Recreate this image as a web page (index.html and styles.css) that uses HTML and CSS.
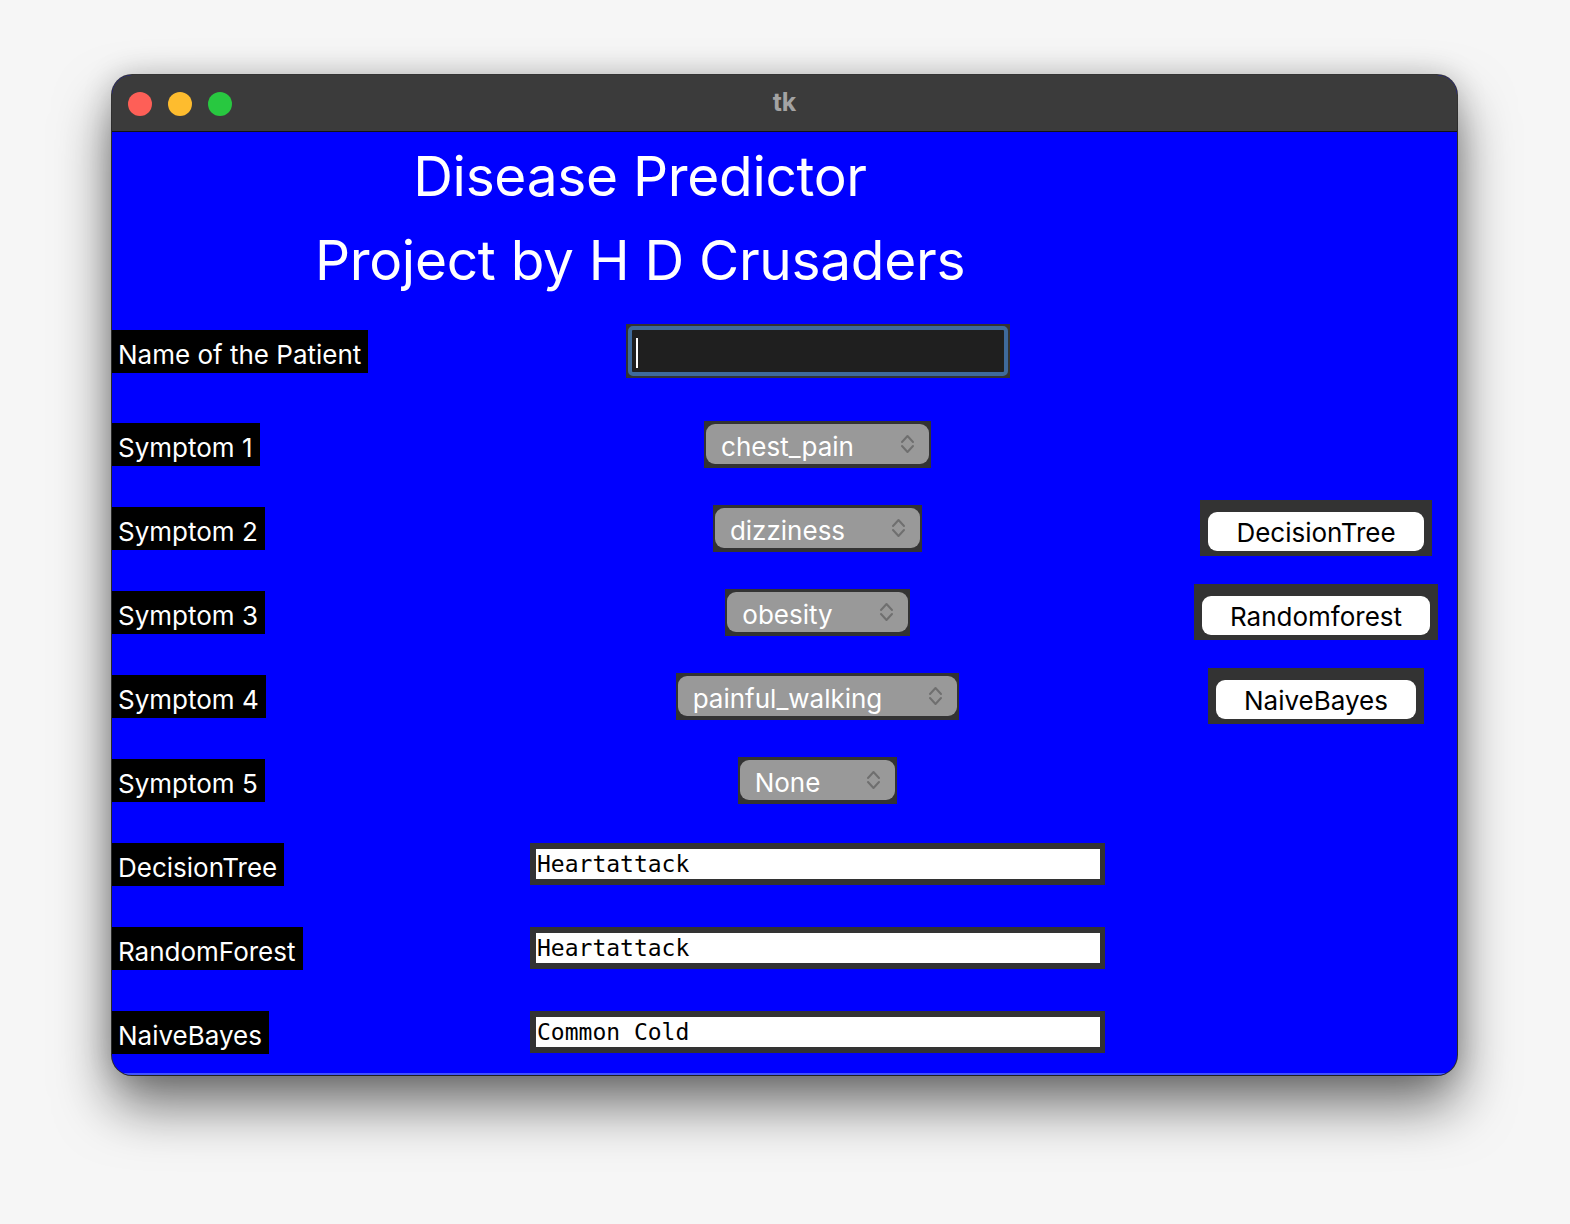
FILE: index.html
```html
<!DOCTYPE html>
<html>
<head>
<meta charset="utf-8">
<link rel="stylesheet" href="styles.css">
</head>
<body>
<div class="window">
  <div class="titlebar">
    <div class="lights">
      <span class="light red"></span>
      <span class="light yellow"></span>
      <span class="light green"></span>
    </div>
    <div class="wtitle">tk</div>
  </div>
  <div class="content">
    <div class="title t1">Disease Predictor</div>
    <div class="title t2">Project by H D Crusaders</div>

    <div class="label r-name">Name of the Patient</div>
    <div class="name-entry r-name"><span class="caret"></span></div>

    <div class="label r1">Symptom 1</div>
    <div class="select r1"><div class="pill"><span>chest_pain</span><svg class="chev" viewBox="0 0 15 22" width="15" height="22"><polyline points="2,9 7.5,3 13,9"/><polyline points="2,13 7.5,19 13,13"/></svg></div></div>

    <div class="label r2">Symptom 2</div>
    <div class="select r2"><div class="pill"><span>dizziness</span><svg class="chev" viewBox="0 0 15 22" width="15" height="22"><polyline points="2,9 7.5,3 13,9"/><polyline points="2,13 7.5,19 13,13"/></svg></div></div>
    <div class="btn-wrap r2"><div class="btn">DecisionTree</div></div>

    <div class="label r3">Symptom 3</div>
    <div class="select r3"><div class="pill"><span>obesity</span><svg class="chev" viewBox="0 0 15 22" width="15" height="22"><polyline points="2,9 7.5,3 13,9"/><polyline points="2,13 7.5,19 13,13"/></svg></div></div>
    <div class="btn-wrap r3"><div class="btn">Randomforest</div></div>

    <div class="label r4">Symptom 4</div>
    <div class="select r4"><div class="pill"><span>painful_walking</span><svg class="chev" viewBox="0 0 15 22" width="15" height="22"><polyline points="2,9 7.5,3 13,9"/><polyline points="2,13 7.5,19 13,13"/></svg></div></div>
    <div class="btn-wrap r4"><div class="btn">NaiveBayes</div></div>

    <div class="label r5">Symptom 5</div>
    <div class="select r5"><div class="pill"><span>None</span><svg class="chev" viewBox="0 0 15 22" width="15" height="22"><polyline points="2,9 7.5,3 13,9"/><polyline points="2,13 7.5,19 13,13"/></svg></div></div>

    <div class="label r6">DecisionTree</div>
    <div class="out r6"><div class="out-in">Heartattack</div></div>

    <div class="label r7">RandomForest</div>
    <div class="out r7"><div class="out-in">Heartattack</div></div>

    <div class="label r8">NaiveBayes</div>
    <div class="out r8"><div class="out-in">Common Cold</div></div>
  </div>
</div>
</body>
</html>
```
FILE: styles.css
```css
html, body {
  margin: 0;
  padding: 0;
}
body {
  background: #f6f6f6;
  width: 1570px;
  height: 1224px;
  padding: 75px 0 0 112px;
  box-sizing: border-box;
  font-family: "Inter", "Noto Sans", sans-serif;
  overflow: hidden;
}
.window {
  width: 1345px;
  height: 1000px;
  border-radius: 20px;
  overflow: hidden;
  box-shadow: 0 0 0 1px rgba(0,0,0,0.75), 0 30px 55px rgba(0,0,0,0.55), 0 0 30px rgba(0,0,0,0.18);
  background: #0000ff;
}
.titlebar {
  height: 57px;
  background: #3b3b3b;
  border-bottom: 1px solid #121212;
  box-sizing: border-box;
  display: flex;
  align-items: center;
  position: relative;
}
.lights {
  display: flex;
  gap: 16px;
  padding-left: 16px;
  padding-top: 2px;
}
.light {
  width: 24px;
  height: 24px;
  border-radius: 50%;
  display: block;
}
.red { background: #fe5f57; }
.yellow { background: #febc2e; }
.green { background: #28c840; }
.wtitle {
  position: absolute;
  left: 0;
  right: 0;
  text-align: center;
  color: #a3a3a3;
  font-weight: 700;
  font-size: 25px;
  top: 12px;
}
.content {
  height: 943px;
  display: grid;
  grid-template-columns: 418px 575px 1fr;
  grid-template-rows: 88px 80px 102px repeat(8, 84px);
  color: #fff;
  box-shadow: inset 0 -2px 0 rgba(110,140,255,0.6);
}
.title {
  grid-column: 1 / 4;
  width: 1056px;
  text-align: center;
  font-size: 55px;
  letter-spacing: -0.3px;
  align-self: center;
  line-height: 1;
}
.t1 { grid-row: 1; }
.t2 { grid-row: 2; }
.r-name { grid-row: 3; }
.r1 { grid-row: 4; }
.r2 { grid-row: 5; }
.r3 { grid-row: 6; }
.r4 { grid-row: 7; }
.r5 { grid-row: 8; }
.r6 { grid-row: 9; }
.r7 { grid-row: 10; }
.r8 { grid-row: 11; }

.label {
  grid-column: 1;
  justify-self: start;
  align-self: center;
  background: #000;
  color: #fff;
  font-size: 26px;
  height: 43px;
  line-height: 49px;
  padding: 0 7px 0 6px;
  white-space: nowrap;
  overflow: hidden;
}
.name-entry {
  grid-column: 2;
  justify-self: center;
  align-self: center;
  width: 384px;
  height: 54px;
  box-sizing: border-box;
  background: #333;
  padding: 2px;
  display: flex;
}
.caret {
  flex: 1;
  border: 4px solid #3e6a9c;
  border-radius: 5px;
  background: #1f1f1f;
  position: relative;
}
.caret::after {
  content: "";
  position: absolute;
  left: 4px;
  top: 8px;
  width: 2px;
  height: 30px;
  background: #fff;
}
.select {
  grid-column: 2;
  justify-self: center;
  align-self: center;
  background: #333;
  padding: 3px 2px 4px 2px;
}
.pill {
  display: flex;
  align-items: center;
  height: 40px;
  background: #999999;
  border-radius: 9px;
  padding: 0 14px 0 15px;
  color: #fff;
  font-size: 26px;
}
.pill span {
  margin-right: 46px;
  line-height: 36px;
  padding-top: 6px;
}
.chev {
  display: block;
}
.chev polyline {
  fill: none;
  stroke: #6f6f6f;
  stroke-width: 2;
  stroke-linecap: round;
  stroke-linejoin: round;
}
.btn-wrap {
  grid-column: 3;
  justify-self: center;
  align-self: center;
  margin-left: 70px;
  background: #333;
  padding: 12px 8px 5px 8px;
}
.btn {
  background: #fff;
  color: #000;
  border-radius: 9px;
  height: 39px;
  line-height: 42px;
  padding: 0 28px;
  font-size: 26px;
  text-align: center;
  white-space: nowrap;
}
.out {
  grid-column: 2;
  align-self: center;
  height: 42px;
  box-sizing: border-box;
  background: #333;
  padding: 6px 5px 6px 6px;
  width: 575px;
}
.out-in {
  background: #fff;
  color: #000;
  height: 30px;
  line-height: 30px;
  font-family: "DejaVu Sans Mono", "Liberation Mono", monospace;
  font-size: 23px;
  padding-left: 1px;
  white-space: pre;
}
```
